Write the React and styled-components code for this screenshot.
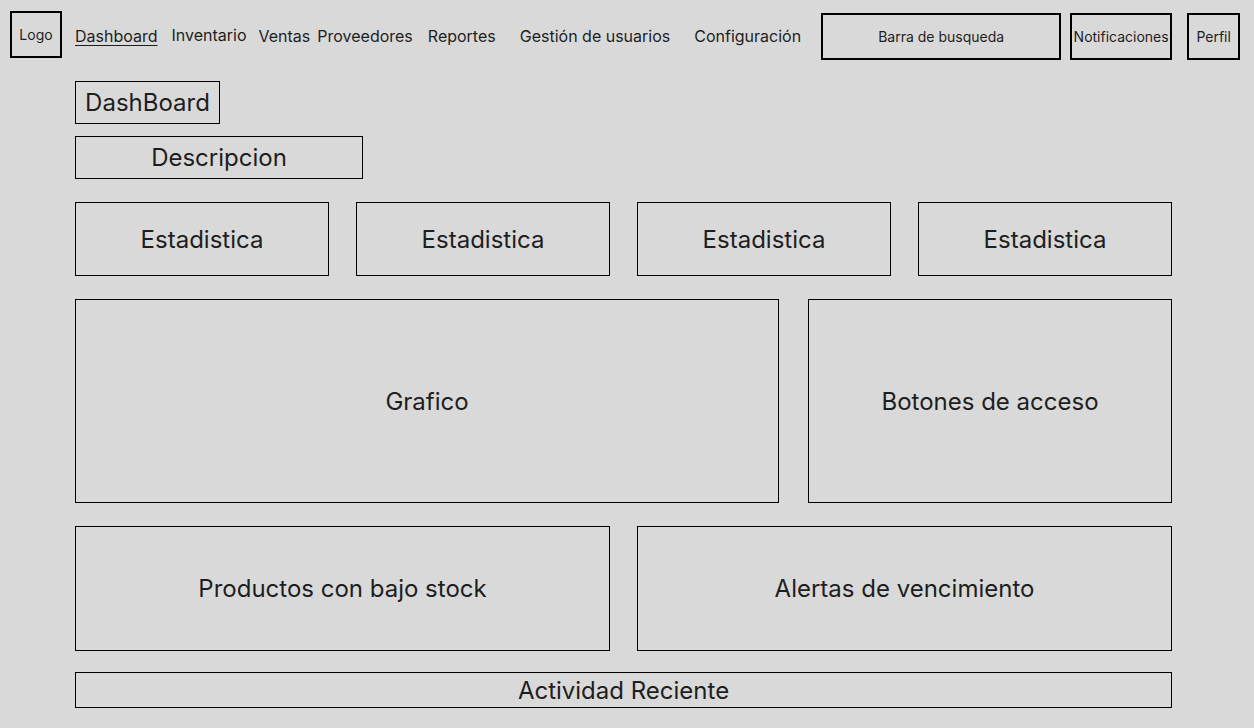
import styled, { createGlobalStyle } from "styled-components";

const GlobalStyle = createGlobalStyle`
  body {
    margin: 0;
    background-color: #d9d9d9;
    font-family: Inter, "Noto Sans", sans-serif;
    color: #1e1e1e;
  }
`;

const Page = styled.div`
  min-height: 728px;
  background-color: #d9d9d9;
`;

const TopBar = styled.header`
  display: flex;
  align-items: flex-start;
  padding: 11px 0 0 10px;
  height: 70px;
  box-sizing: border-box;
`;

const Logo = styled.div`
  width: 52px;
  height: 47px;
  box-sizing: border-box;
  border: 2px solid #000;
  display: flex;
  align-items: center;
  justify-content: center;
  font-size: 14px;
  margin-right: 13px;
`;

const NavLink = styled.a`
  margin-left: ${(props) => props.$gap}px;
  margin-top: ${(props) => props.$top}px;
  font-size: 16px;
  line-height: 20px;
  color: #1e1e1e;
  text-decoration: ${(props) => (props.$active ? "underline" : "none")};
  text-underline-offset: 3px;
  text-decoration-thickness: 1px;
  white-space: nowrap;
  cursor: pointer;
`;

const HeadBox = styled.div`
  width: ${(props) => props.$width}px;
  height: 47px;
  margin-top: 2px;
  margin-left: ${(props) => props.$gap}px;
  box-sizing: border-box;
  border: 2px solid #000;
  display: flex;
  align-items: center;
  justify-content: center;
  font-size: 14px;
  white-space: nowrap;
`;

const Main = styled.main`
  display: flex;
  flex-direction: column;
  padding: 11px 82px 0 75px;
`;

const Box = styled.div`
  box-sizing: border-box;
  border: 1px solid #000;
  display: flex;
  align-items: center;
  justify-content: center;
  font-size: 24px;
  height: ${(props) => props.$height}px;
  width: ${(props) => (props.$width ? `${props.$width}px` : "auto")};
`;

const Grid = styled.div`
  display: grid;
  grid-template-columns: ${(props) => props.$cols};
  column-gap: ${(props) => props.$gap}px;
  margin-top: ${(props) => props.$top}px;
`;

const navItems = [
  { label: "Dashboard", gap: 0, top: 15, active: true },
  { label: "Inventario", gap: 14, top: 14 },
  { label: "Ventas", gap: 12, top: 15 },
  { label: "Proveedores", gap: 7, top: 15 },
  { label: "Reportes", gap: 15, top: 15 },
  { label: "Gestión de usuarios", gap: 24, top: 15 },
  { label: "Configuración", gap: 24, top: 15 },
];

export default function App() {
  return (
    <Page>
      <GlobalStyle />
      <TopBar>
        <Logo>Logo</Logo>
        {navItems.map((item) => (
          <NavLink
            key={item.label}
            $gap={item.gap}
            $top={item.top}
            $active={item.active}
          >
            {item.label}
          </NavLink>
        ))}
        <HeadBox $width={240} $gap={20}>
          Barra de busqueda
        </HeadBox>
        <HeadBox $width={102} $gap={9}>
          Notificaciones
        </HeadBox>
        <HeadBox $width={53} $gap={15}>
          Perfil
        </HeadBox>
      </TopBar>
      <Main>
        <Box $height={43} $width={145}>
          DashBoard
        </Box>
        <Grid $cols="288px" $gap={0} $top={12}>
          <Box $height={43}>Descripcion</Box>
        </Grid>
        <Grid $cols="repeat(4, 254px)" $gap={27} $top={23}>
          <Box $height={74}>Estadistica</Box>
          <Box $height={74}>Estadistica</Box>
          <Box $height={74}>Estadistica</Box>
          <Box $height={74}>Estadistica</Box>
        </Grid>
        <Grid $cols="704px 364px" $gap={29} $top={23}>
          <Box $height={204}>Grafico</Box>
          <Box $height={204}>Botones de acceso</Box>
        </Grid>
        <Grid $cols="535px 535px" $gap={27} $top={23}>
          <Box $height={125}>Productos con bajo stock</Box>
          <Box $height={125}>Alertas de vencimiento</Box>
        </Grid>
        <Grid $cols="1097px" $gap={0} $top={21}>
          <Box $height={36}>Actividad Reciente</Box>
        </Grid>
      </Main>
    </Page>
  );
}
